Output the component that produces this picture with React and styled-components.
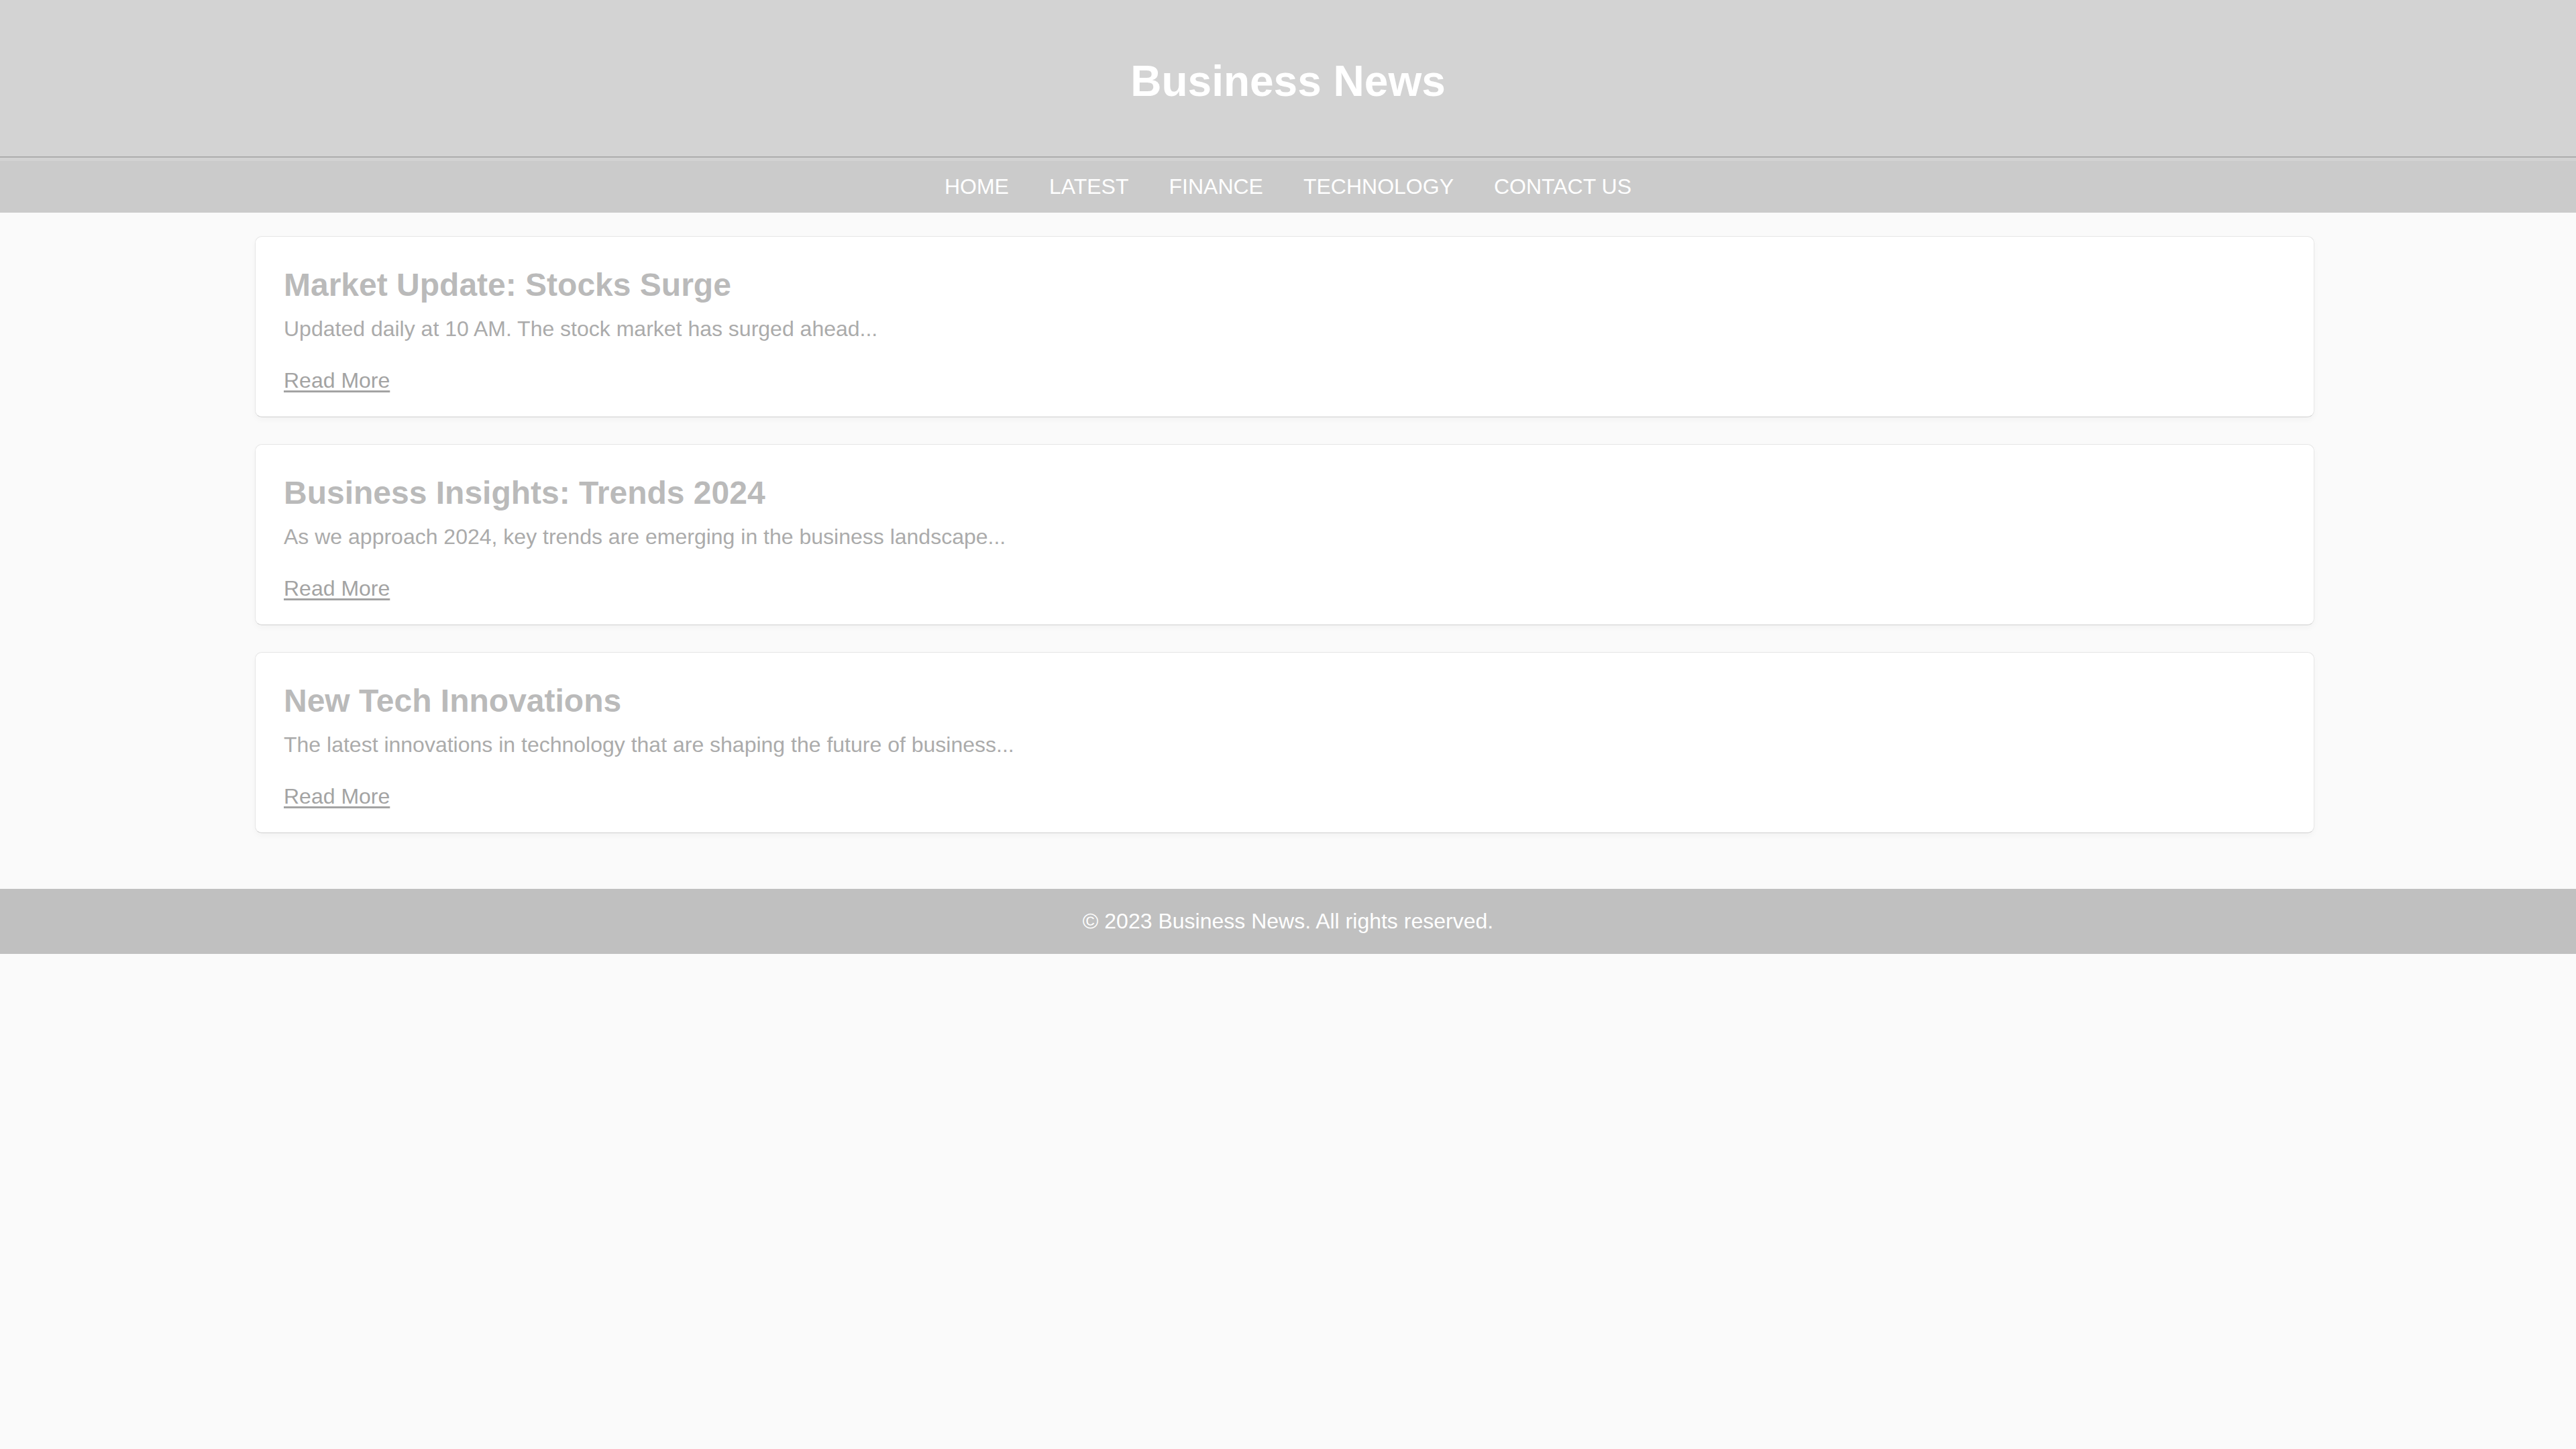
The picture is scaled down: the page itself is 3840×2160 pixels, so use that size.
import React from "react";
import styled, { createGlobalStyle } from "styled-components";

const GlobalStyle = createGlobalStyle`
  html, body {
    margin: 0;
    padding: 0;
    background-color: #fafafa;
    font-family: "Liberation Sans", Arial, sans-serif;
  }
`;

const Header = styled.header`
  height: 235px;
  box-sizing: border-box;
  padding-top: 8px;
  background-color: #d3d3d3;
  border-bottom: 2px solid #adadad;
  display: flex;
  align-items: center;
  justify-content: center;
`;

const Title = styled.h1`
  margin: 0;
  font-size: 64px;
  font-weight: bold;
  color: #ffffff;
`;

const Nav = styled.nav`
  height: 77px;
  background-color: #cbcbcb;
  border-top: 5px solid #d2d2d2;
  display: flex;
  align-items: center;
  justify-content: center;
`;

const NavLink = styled.a`
  margin: 0 30px;
  font-size: 32px;
  color: #ffffff;
  text-decoration: none;
  text-transform: uppercase;
`;

const Main = styled.main`
  margin: 0 calc(10% + 6px) 0 calc(10% - 4px);
  padding: 35px 0 83px;
  display: flex;
  flex-direction: column;
  gap: 40px;
`;

const Card = styled.article`
  background-color: #ffffff;
  border: 1px solid #e6e6e6;
  border-bottom-color: #cfcfcf;
  border-radius: 10px;
  box-shadow: 0 4px 10px rgba(0, 0, 0, 0.03);
  padding: 44px 42px 35px;
`;

const CardTitle = styled.h2`
  margin: 0 0 20px;
  font-size: 48px;
  font-weight: bold;
  color: #bababa;
`;

const Excerpt = styled.p`
  margin: 0 0 40px;
  font-size: 32px;
  color: #ababab;
`;

const ReadMore = styled.a`
  display: inline-block;
  font-size: 32px;
  color: #a3a3a3;
  text-decoration: underline;
  text-underline-offset: 4px;
`;

const Footer = styled.footer`
  background-color: #c0c0c0;
  padding: 30px 0;
  text-align: center;
  font-size: 32px;
  color: #ffffff;
`;

const links = ["Home", "Latest", "Finance", "Technology", "Contact Us"];

const articles = [
  {
    title: "Market Update: Stocks Surge",
    text: "Updated daily at 10 AM. The stock market has surged ahead...",
  },
  {
    title: "Business Insights: Trends 2024",
    text: "As we approach 2024, key trends are emerging in the business landscape...",
  },
  {
    title: "New Tech Innovations",
    text: "The latest innovations in technology that are shaping the future of business...",
  },
];

export default function App() {
  return (
    <>
      <GlobalStyle />
      <Header>
        <Title>Business News</Title>
      </Header>
      <Nav>
        {links.map((l) => (
          <NavLink key={l} href="#">
            {l}
          </NavLink>
        ))}
      </Nav>
      <Main>
        {articles.map((a) => (
          <Card key={a.title}>
            <CardTitle>{a.title}</CardTitle>
            <Excerpt>{a.text}</Excerpt>
            <ReadMore href="#">Read More</ReadMore>
          </Card>
        ))}
      </Main>
      <Footer>© 2023 Business News. All rights reserved.</Footer>
    </>
  );
}
